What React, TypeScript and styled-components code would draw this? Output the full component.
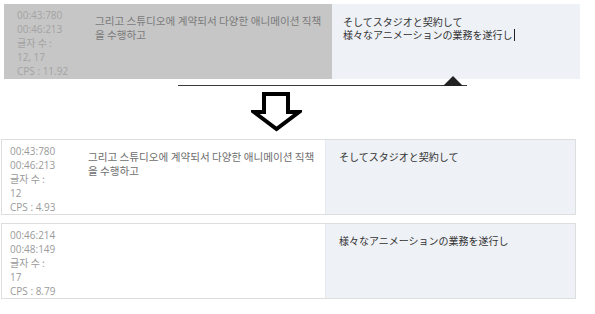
import React from "react";
import styled, { createGlobalStyle } from "styled-components";

const GlobalStyle = createGlobalStyle`
  body {
    margin: 0;
    background: #ffffff;
    font-family: "Open Sans", "Noto Sans CJK KR", sans-serif;
  }
`;

type Cue = {
  start: string;
  end: string;
  count: string;
  cps: string;
  source: string;
  target: string;
};

const editing: Cue = {
  start: "00:43:780",
  end: "00:46:213",
  count: "12, 17",
  cps: "11.92",
  source: "그리고 스튜디오에 계약되서 다양한 애니메이션 직책 을 수행하고",
  target: "そしてスタジオと契約して\n様々なアニメーションの業務を遂行し",
};

const result: Cue[] = [
  {
    start: "00:43:780",
    end: "00:46:213",
    count: "12",
    cps: "4.93",
    source: "그리고 스튜디오에 계약되서 다양한 애니메이션 직책 을 수행하고",
    target: "そしてスタジオと契約して",
  },
  {
    start: "00:46:214",
    end: "00:48:149",
    count: "17",
    cps: "8.79",
    source: "",
    target: "様々なアニメーションの業務を遂行し",
  },
];

const Page = styled.div`
  width: 595px;
  height: 314px;
  padding: 4px 0 0 0;
  box-sizing: border-box;
  display: flex;
  flex-direction: column;
`;

const Editor = styled.div`
  margin-left: 4px;
  width: 576px;
  height: 75px;
  display: grid;
  grid-template-columns: 78px 250px 1fr;
`;

const Row = styled.div`
  margin-left: 1px;
  width: 575px;
  height: 76px;
  box-sizing: border-box;
  border: 1px solid #dedede;
  display: grid;
  grid-template-columns: 75px 248px 1fr;
  & + & {
    margin-top: 8px;
  }
`;

const Meta = styled.div<{ $active?: boolean }>`
  background: ${({ $active }) => ($active ? "#c6c6c6" : "#ffffff")};
  color: ${({ $active }) => ($active ? "#a3a3a3" : "#9a9a9a")};
  padding: ${({ $active }) => ($active ? "4px 0 0 13px" : "4px 0 0 8px")};
  font-size: 10px;
  line-height: 14px;
  white-space: nowrap;
`;

const Label = styled.div`
  font-family: "Noto Sans CJK KR", sans-serif;
`;

const Source = styled.div<{ $active?: boolean }>`
  background: ${({ $active }) => ($active ? "#c6c6c6" : "#ffffff")};
  color: ${({ $active }) => ($active ? "#7a7a7a" : "#6e6e6e")};
  padding: ${({ $active }) => ($active ? "10px 0 0 13px" : "10px 0 0 11px")};
  font-family: "Noto Sans CJK KR", sans-serif;
  font-size: 10.6px;
  line-height: 14px;
`;

const SourceText = styled.div`
  max-width: 228px;
`;

const Target = styled.div<{ $active?: boolean }>`
  background: #eef1f6;
  border-left: ${({ $active }) => ($active ? "none" : "1px solid #e6e9ee")};
  color: #333333;
  padding: ${({ $active }) => ($active ? "11px 0 0 11px" : "10px 0 0 13px")};
  font-family: "Noto Sans CJK JP", sans-serif;
  font-size: 10px;
  line-height: 13px;
  white-space: pre-line;
`;

const Caret = styled.span`
  display: inline-block;
  width: 1px;
  height: 12px;
  margin-left: 1px;
  vertical-align: -2px;
  background: #222222;
`;

const Divider = styled.div`
  position: relative;
  margin: 6px 0 0 178px;
  width: 289px;
  height: 1px;
  background: #3a3a3a;
`;

const Pointer = styled.div`
  position: absolute;
  left: 265px;
  bottom: 0;
  width: 0;
  height: 0;
  border-left: 10px solid transparent;
  border-right: 10px solid transparent;
  border-bottom: 10px solid #222222;
`;

const ArrowBox = styled.div`
  margin: 6px 0 0 251px;
  width: 51px;
  height: 40px;
  display: flex;
`;

const List = styled.div`
  margin-top: 7px;
  display: flex;
  flex-direction: column;
`;

const MetaBlock = ({ cue, active }: { cue: Cue; active?: boolean }) => (
  <Meta $active={active}>
    <div>{cue.start}</div>
    <div>{cue.end}</div>
    <Label>글자 수 :</Label>
    <div>{cue.count}</div>
    <div>CPS : {cue.cps}</div>
  </Meta>
);

const DownArrow = () => (
  <svg width="51" height="40" viewBox="0 0 51 40">
    <polygon
      points="13,2 37,2 37,20 48,20 25.5,37 3,20 13,20"
      fill="none"
      stroke="#000000"
      strokeWidth="4"
      strokeLinejoin="miter"
    />
  </svg>
);

export default function App() {
  return (
    <>
      <GlobalStyle />
      <Page>
        <Editor>
          <MetaBlock cue={editing} active />
          <Source $active>
            <SourceText>{editing.source}</SourceText>
          </Source>
          <Target $active>
            {editing.target}
            <Caret />
          </Target>
        </Editor>
        <Divider>
          <Pointer />
        </Divider>
        <ArrowBox>
          <DownArrow />
        </ArrowBox>
        <List>
          {result.map((cue) => (
            <Row key={cue.start}>
              <MetaBlock cue={cue} />
              <Source>
                <SourceText>{cue.source}</SourceText>
              </Source>
              <Target>{cue.target}</Target>
            </Row>
          ))}
        </List>
      </Page>
    </>
  );
}
